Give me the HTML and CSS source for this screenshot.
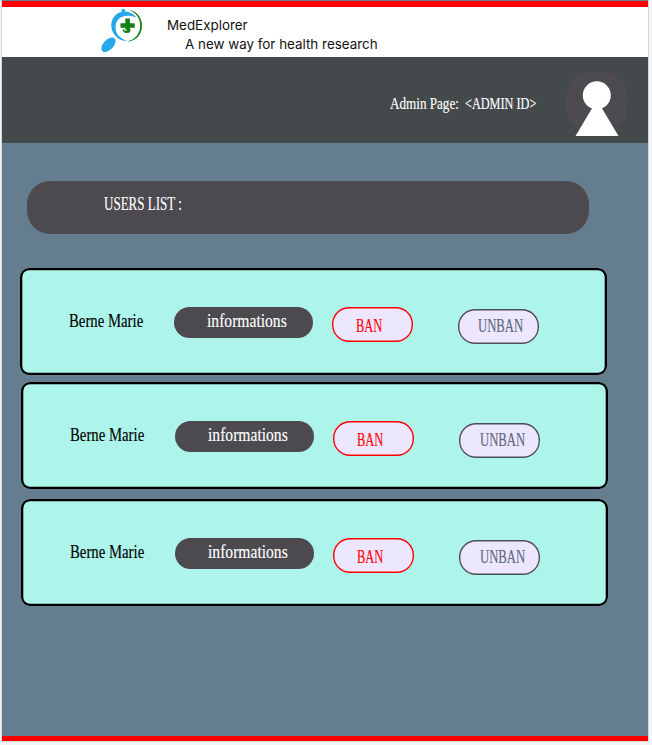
FILE: index.html
```
<!DOCTYPE html>
<html lang="en">
<head>
<meta charset="utf-8">
<title>MedExplorer</title>
<link rel="stylesheet" href="styles.css">
</head>
<body>
<div class="page">
  <header class="brand">
    <svg class="logo" width="44" height="46" viewBox="0 0 44 46">
      <ellipse cx="7.500" cy="35.800" rx="8.800" ry="5" transform="rotate(-46 7.500 35.800)" fill="#25a9e8"/>
      <circle cx="22.300" cy="1.700" r="1.800" fill="#25a9e8"/>
      <path d="M35.500 8.500C31 3 24 1.300 18.500 3.500C10 7 8.300 17 12.300 24C15.500 29.500 20.500 32.300 26.500 31.800C19.500 30.300 15 25.500 14.600 19.500C13.800 10 22 3.500 35.500 8.500Z" fill="#25a9e8"/>
      <path d="M27.500 .8C36.500 2.300 41.300 9.300 41 17.300C40.700 26.300 34.300 32.500 26.300 32.500C33.500 30.700 39 25.300 39.200 17.300C39.400 9.500 35.500 3.800 27.500 .8Z" fill="#138013"/>
      <path d="M26.600 9.600V23.500M19.500 16.500H33.700" fill="none" stroke="#138013" stroke-width="4.600"/>
      <path d="M22.300 20.300Q23 23.700 26.500 23Q28.800 22.600 28.800 20" fill="none" stroke="#138013" stroke-width="1.500"/>
      <path d="M23.300 20Q24.300 21.800 26 21" fill="none" stroke="#fff" stroke-width=".9"/>
    </svg>
    <div class="brand-text">
      <div class="name">MedExplorer</div>
      <div class="tagline">A new way for health research</div>
    </div>
  </header>
  <div class="admin-bar">
    <div class="admin-label"><span class="t admin-title">Admin Page:</span></div>
    <div class="admin-id"><span class="t admin-value">&lt;ADMIN ID&gt;</span></div>
    <div class="avatar">
      <svg width="62" height="66" viewBox="0 0 62 66">
        <rect x="0" y="0" width="60" height="60" rx="22" fill="#4d4b50"/>
        <path d="M30 28L51.500 64H8.500Z" fill="#fff"/>
        <circle cx="29.800" cy="23.300" r="14" fill="#fff"/>
      </svg>
    </div>
  </div>
  <main>
    <h1 class="list-title"><span class="t title-text">USERS LIST :</span></h1>
    <section class="user first">
      <div class="user-name"><span class="t name-text">Berne Marie</span></div>
      <div class="info"><span class="t info-text">informations</span></div>
      <div class="ban"><span class="t ban-text">BAN</span></div>
      <div class="unban"><span class="t unban-text">UNBAN</span></div>
    </section>
    <section class="user second">
      <div class="user-name"><span class="t name-text">Berne Marie</span></div>
      <div class="info"><span class="t info-text">informations</span></div>
      <div class="ban"><span class="t ban-text">BAN</span></div>
      <div class="unban"><span class="t unban-text">UNBAN</span></div>
    </section>
    <section class="user third">
      <div class="user-name"><span class="t name-text">Berne Marie</span></div>
      <div class="info"><span class="t info-text">informations</span></div>
      <div class="ban"><span class="t ban-text">BAN</span></div>
      <div class="unban"><span class="t unban-text">UNBAN</span></div>
    </section>
  </main>
</div>
</body>
</html>
```
FILE: styles.css
```
* { box-sizing: border-box; }

body {
  margin: 0;
  height: 745px;
  overflow: hidden;
  background: #f5f5f5;
  font-family: "Liberation Serif", serif;
}

.page {
  width: 646px;
  height: 741px;
  margin-left: 2px;
  background: #647e90;
  border-bottom: 5px solid #f00;
  padding-top: 1px;
  box-shadow: 0 0 0 1px #d5d8da;
}

.brand {
  height: 56px;
  border-top: 6px solid #f00;
  background: #fff;
  display: flex;
  align-items: flex-start;
}

.logo {
  flex: none;
  margin: 2px 0 0 99px;
}

.brand-text {
  margin: 9px 0 0 22px;
  font-family: Inter, sans-serif;
  font-size: 13.4px;
  line-height: 19px;
  color: #111;
  white-space: nowrap;
}

.tagline { margin-left: 18px; }

.admin-bar {
  height: 86px;
  background: #44494c;
  display: flex;
  color: #fff;
  font-size: 17.5px;
  line-height: 20px;
}

/* Condensed serif lettering */
.t {
  display: inline-block;
  white-space: nowrap;
  transform-origin: 0 50%;
  -webkit-text-stroke: .15px currentColor;
}

.admin-label { width: 75px; margin: 36px 0 0 387.5px; }
.admin-id { width: 102.5px; margin-top: 36px; }
.admin-title { transform: scaleX(.75); }
.admin-value { transform: scaleX(.7); }
.avatar { margin-top: 15px; }
.avatar svg { display: block; }

main { padding-top: 38px; }

.list-title {
  width: 562px;
  height: 53px;
  margin: 0 0 34px 25.4px;
  padding: 11px 0 0 76.6px;
  border-radius: 23px;
  background: #4c4a4f;
  color: #fff;
  font-size: 19.5px;
  font-weight: 400;
  line-height: 24px;
}

.title-text { transform: scaleX(.667); }

.user {
  width: 587px;
  height: 107px;
  margin-left: 19.4px;
  padding: 2px 0 0 49px;
  box-shadow: inset 0 0 0 2.3px #000;
  border-radius: 9px;
  background: #adf4eb;
  display: flex;
  align-items: flex-start;
  font-size: 19.5px;
  line-height: 24px;
}

.first { margin-left: 18px; }
.second { margin-top: 7px; }
.third { margin-top: 10px; }

.user-name { width: 105px; margin-top: 39px; color: #000; }
.name-text { transform: scaleX(.757); }

.info {
  width: 139px;
  height: 31px;
  margin-top: 37px;
  padding: 2px 0 0 33px;
  border-radius: 16px;
  background: #4c4a4f;
  color: #fff;
}

.info-text { transform: scaleX(.8); }

.ban, .unban {
  width: 81px;
  height: 35px;
  box-shadow: inset 0 0 0 1.4px #f00;
  border-radius: 17px;
  background: #ece6ff;
}

.ban { margin: 37px 0 0 18.5px; padding: 7px 0 0 24.5px; color: #f00; }
.ban-text { transform: scaleX(.64); }
.unban { margin: 39px 0 0 45.4px; padding: 5px 0 0 20.5px; box-shadow: inset 0 0 0 1.4px #4c4f55; color: #5d6878; }
.unban-text { transform: scaleX(.652); }
```
